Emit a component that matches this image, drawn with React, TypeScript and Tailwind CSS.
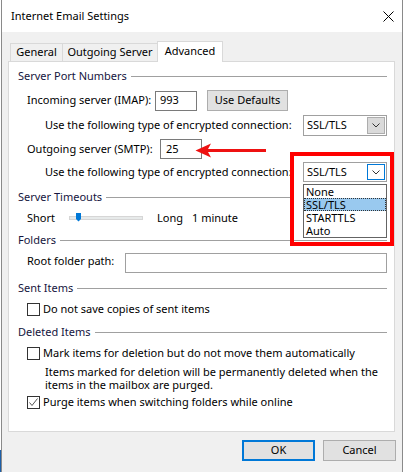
import React from 'react';

const Heading = ({ label, lineClass = '' }: { label: string; lineClass?: string }) => (
  <div className="flex h-[16px] items-center">
    <span className="whitespace-nowrap text-[#151540]">{label}</span>
    <div className={`ml-[4px] h-px flex-1 bg-[#a0a0a0] ${lineClass}`} />
  </div>
);

const Chevron = () => (
  <svg width="8" height="5" viewBox="0 0 8 5" fill="none">
    <path d="M0.5 0.5 L4 4 L7.5 0.5" stroke="#333" strokeWidth="1" />
  </svg>
);

const Checkbox = ({ checked, label }: { checked?: boolean; label: string }) => (
  <div className="flex h-[16px] items-center pl-[9px]">
    <div className="flex h-[13px] w-[13px] items-center justify-center border border-[#333] bg-white">
      {checked && (
        <svg width="11" height="11" viewBox="0 0 11 11" fill="none">
          <path d="M1.5 5.5 L4 8.5 L9.5 1.5" stroke="#555" strokeWidth="1" />
        </svg>
      )}
    </div>
    <span className="ml-[3px] whitespace-nowrap">{label}</span>
  </div>
);

const Select = ({ focused, className = '' }: { focused?: boolean; className?: string }) => (
  <div className={`ml-auto flex w-[84px] items-center border border-[#a0a0a0] bg-white ${className}`}>
    <span className="flex-1 pl-[3px]">SSL/TLS</span>
    <div
      className={`my-px mr-px flex h-[calc(100%-2px)] w-[18px] items-center justify-center border ${
        focused ? 'border-[#0078d7] bg-white' : 'border-[#adadad] bg-[#dadada]'
      }`}
    >
      <Chevron />
    </div>
  </div>
);

export default function App() {
  return (
    <div className="relative flex h-[472px] w-[405px] overflow-hidden bg-white font-['Noto_Sans',sans-serif] text-[11px] text-black">
      {/* desktop strip on the left */}
      <div className="flex w-px flex-col">
        <div className="flex-1 bg-white" />
        <div className="h-[22px] bg-[#1c5fa8]" />
      </div>

      {/* Dialog */}
      <div className="flex w-[402px] flex-col border-x border-[#8a8a8a] bg-[#f0f0f0]">
        {/* Title bar */}
        <div className="flex h-[32px] items-center bg-white pl-[9px] pr-[8px]">
          <span className="flex-1 text-[11px]">Internet Email Settings</span>
          <svg width="11" height="11" viewBox="0 0 11 11" fill="none">
            <path d="M0.5 0.5 L10.5 10.5 M10.5 0.5 L0.5 10.5" stroke="#000" strokeWidth="1" />
          </svg>
        </div>

        <div className="flex flex-col px-[6px] pt-[9px]">
          {/* Tabs */}
          <div className="flex h-[21px] items-start pl-[2px]">
            <div className="mt-[2px] flex h-[18px] w-[52px] items-center justify-center border-l border-t border-[#d9d9d9]">
              General
            </div>
            <div className="mt-[2px] flex h-[18px] w-[95px] items-center justify-center border-l border-t border-[#d9d9d9]">
              Outgoing Server
            </div>
            <div className="relative z-10 flex h-[21px] w-[66px] items-center justify-center border-x border-t border-[#d9d9d9] bg-white pb-px">
              Advanced
            </div>
          </div>

          {/* Panel */}
          <div className="-mt-px flex h-[371px] w-[387px] flex-col border border-[#d9d9d9] bg-white pl-[9px] pr-[7px] pt-[6px]">
            <Heading label="Server Port Numbers" />

            <div className="mt-[6px] flex h-[21px] items-center pl-[9px]">
              <span className="w-[128px] whitespace-nowrap">Incoming server (IMAP):</span>
              <div className="flex h-[20px] w-[42px] items-center border border-[#7a7a7a] pl-[4px]">993</div>
              <div className="ml-[10px] flex h-[21px] w-[81px] items-center justify-center border border-[#adadad] bg-[#e1e1e1]">
                Use Defaults
              </div>
            </div>

            <div className="mt-[4px] flex h-[21px] items-center pl-[27px]">
              <span className="whitespace-nowrap">Use the following type of encrypted connection:</span>
              <Select className="h-[21px]" />
            </div>

            <div className="mt-[3px] flex h-[20px] items-center pl-[9px]">
              <span className="w-[133px] whitespace-nowrap">Outgoing server (SMTP):</span>
              <div className="flex h-[20px] w-[42px] items-center border border-[#7a7a7a] pl-[5px]">25</div>
            </div>

            <div className="mt-[3px] flex h-[20px] items-center pl-[27px]">
              <span className="whitespace-nowrap">Use the following type of encrypted connection:</span>
              <Select focused className="h-[20px]" />
            </div>

            <div className="mt-[7px]">
              <Heading label="Server Timeouts" lineClass="mr-[97px]" />
            </div>

            <div className="mt-[5px] flex h-[16px] items-center pl-[9px]">
              <span className="w-[42px]">Short</span>
              <div className="relative h-[4px] w-[74px] border border-[#d6d6d6] bg-[#e7eaea]">
                <svg className="absolute left-[6px] top-[-4px]" width="5" height="9" viewBox="0 0 5 9">
                  <path d="M0 0 H5 V6 L2.5 8.5 L0 6 Z" fill="#0078d7" />
                </svg>
              </div>
              <span className="ml-[14px] w-[35px]">Long</span>
              <span>1 minute</span>
            </div>

            <div className="mt-[6px]">
              <Heading label="Folders" />
            </div>

            <div className="mt-[5px] flex h-[20px] items-center pl-[9px]">
              <span className="-mt-[4px] w-[98px] whitespace-nowrap">Root folder path:</span>
              <div className="h-[20px] flex-1 border border-[#a0a0a0] bg-white" />
            </div>

            <div className="mt-[7px]">
              <Heading label="Sent Items" />
            </div>
            <div className="mt-[5px]">
              <Checkbox label="Do not save copies of sent items" />
            </div>

            <div className="mt-[7px]">
              <Heading label="Deleted Items" />
            </div>
            <div className="mt-[5px]">
              <Checkbox label="Mark items for deletion but do not move them automatically" />
            </div>
            <div className="mt-[4px] pl-[27px] leading-[13px]">
              <div>Items marked for deletion will be permanently deleted when the</div>
              <div>items in the mailbox are purged.</div>
            </div>
            <div className="mt-[3px]">
              <Checkbox checked label="Purge items when switching folders while online" />
            </div>
          </div>

          {/* Buttons */}
          <div className="mt-[8px] flex justify-end gap-[8px]">
            <div className="flex h-[21px] w-[73px] items-center justify-center border-2 border-[#0078d7] bg-[#e1e1e1]">
              OK
            </div>
            <div className="flex h-[21px] w-[73px] items-center justify-center border border-[#adadad] bg-[#e1e1e1]">
              Cancel
            </div>
          </div>
        </div>
      </div>

      <div className="w-[2px] bg-white" />

      {/* Annotation: red arrow pointing at SMTP port */}
      <svg className="absolute left-[195px] top-[143px]" width="72" height="15" viewBox="0 0 72 15">
        <path d="M0.5 7.5 L16 0.5 L13 6 L71 6 L71 9 L13 9 L16 14.5 Z" fill="#ee1111" />
      </svg>

      {/* Annotation: red highlight box */}
      <div className="absolute left-[290px] top-[152px] h-[94px] w-[104px] border-4 border-[#ff0000]" />

      {/* Open dropdown list */}
      <div className="absolute left-[303px] top-[184px] flex h-[54px] w-[84px] flex-col border border-[#646464] bg-white">
        <div className="h-[13px] pl-[2px] leading-[13px]">None</div>
        <div className="h-[13px] border border-dotted border-[#333] bg-[#99c9ef] pl-px leading-[11px]">SSL/TLS</div>
        <div className="h-[13px] pl-[2px] leading-[13px]">STARTTLS</div>
        <div className="h-[13px] pl-[2px] leading-[13px]">Auto</div>
      </div>
    </div>
  );
}
